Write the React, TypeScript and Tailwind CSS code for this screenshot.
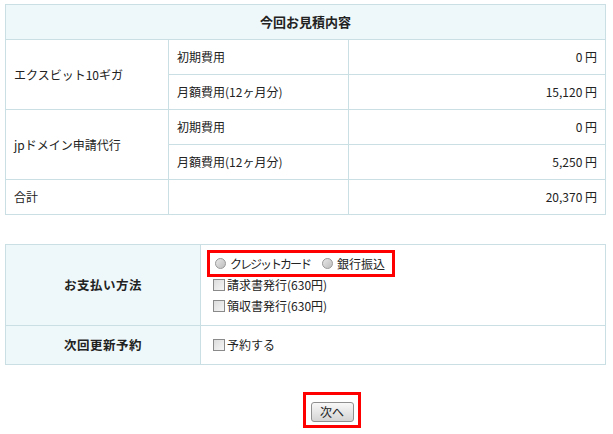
import React from "react";

const font = { fontFamily: '"Noto Sans CJK JP", "Liberation Sans", sans-serif' };

const rows = [
  { name: "エクスビット10ギガ", items: [["初期費用", "0 円"], ["月額費用(12ヶ月分)", "15,120 円"]] },
  { name: "jpドメイン申請代行", items: [["初期費用", "0 円"], ["月額費用(12ヶ月分)", "5,250 円"]] },
];

function Radio({ label, tight }: { label: string; tight?: boolean }) {
  return (
    <label className="flex items-center gap-[4px]">
      <span className="w-[11px] h-[11px] rounded-full border border-[#9a9a9a] bg-gradient-to-br from-[#e8e8e8] to-[#bdbdbd]" />
      <span className={tight ? "tracking-[-2px]" : ""}>{label}</span>
    </label>
  );
}

function Check({ label }: { label: string }) {
  return (
    <label className="flex items-center gap-[2px] h-[21px]">
      <span className="w-[12px] h-[12px] border border-[#8a8a8a] bg-gradient-to-br from-[#dcdcdc] to-[#f6f6f6]" />
      <span>{label}</span>
    </label>
  );
}

export default function App() {
  const cell = "border border-[#c9dfe3] h-[35px] px-[8px]";
  return (
    <div className="bg-white text-[12px] text-[#222] pl-[5px] pt-[4px] w-[613px] h-[434px]" style={font}>
      <table className="border-collapse w-[601px] table-fixed">
        <colgroup>
          <col className="w-[163px]" />
          <col className="w-[180px]" />
          <col />
        </colgroup>
        <tbody>
          <tr>
            <th colSpan={3} className={`${cell} bg-[#eef7f9] text-center font-bold text-[13px]`}>
              今回お見積内容
            </th>
          </tr>
          {rows.map((r) =>
            r.items.map(([k, v], i) => (
              <tr key={r.name + i}>
                {i === 0 && (
                  <td rowSpan={2} className={cell}>
                    {r.name}
                  </td>
                )}
                <td className={cell}>{k}</td>
                <td className={`${cell} text-right`}>{v}</td>
              </tr>
            ))
          )}
          <tr>
            <td className={cell}>合計</td>
            <td className={cell}></td>
            <td className={`${cell} text-right`}>20,370 円</td>
          </tr>
        </tbody>
      </table>

      <table className="border-collapse w-[601px] table-fixed mt-[29px]">
        <colgroup>
          <col className="w-[195px]" />
          <col />
        </colgroup>
        <tbody>
          <tr>
            <th className="border border-[#c9dfe3] bg-[#eef7f9] h-[81px] text-center font-bold text-[12.5px] tracking-[0.5px]">
              お支払い方法
            </th>
            <td className="border border-[#c9dfe3] h-[81px] py-[8px] align-top">
              <div className="ml-[9px] w-[182px] h-[21px] outline-3 outline-[#ff0000] flex items-center gap-[12px] pl-[5px]">
                <Radio label="クレジットカード" tight />
                <Radio label="銀行振込" />
              </div>
              <div className="pl-[12px]">
                <Check label="請求書発行(630円)" />
                <Check label="領収書発行(630円)" />
              </div>
            </td>
          </tr>
          <tr>
            <th className="border border-[#c9dfe3] bg-[#eef7f9] h-[39px] text-center font-bold text-[12.5px] tracking-[0.5px]">
              次回更新予約
            </th>
            <td className="border border-[#c9dfe3] h-[39px] pl-[12px]">
              <Check label="予約する" />
            </td>
          </tr>
        </tbody>
      </table>

      <div className="mt-[27px] ml-[298px] w-[58px] h-[36px] border-[3px] border-[#ff0000] flex items-center justify-center">
        <button className="w-[43px] h-[20px] mt-[4px] rounded-[3px] border border-[#8f8f8f] bg-gradient-to-b from-[#f8f8f8] to-[#d4d4d4] text-[12px] leading-none text-[#222]">
          次へ
        </button>
      </div>
    </div>
  );
}
